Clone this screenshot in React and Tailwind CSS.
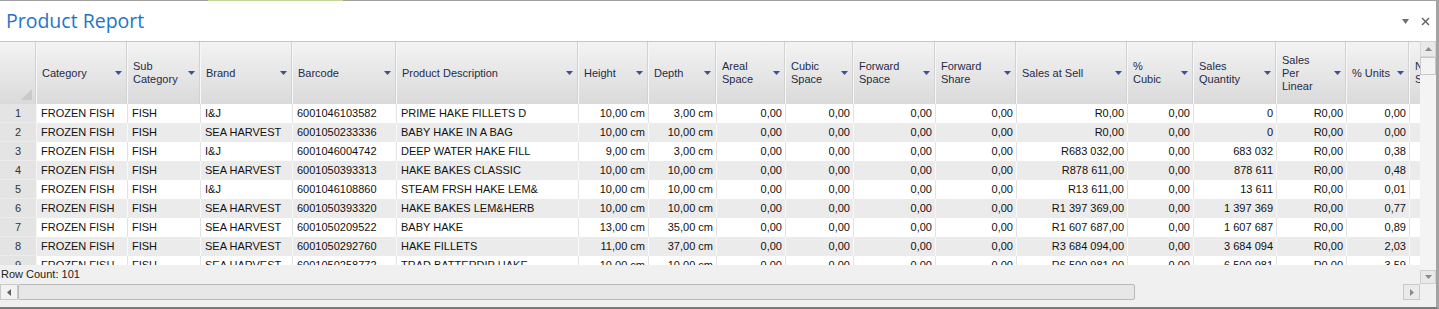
const columns = [
  { label: ["Category"], w: "w-[91px]" },
  { label: ["Sub", "Category"], w: "w-[73px]" },
  { label: ["Brand"], w: "w-[92px]" },
  { label: ["Barcode"], w: "w-[104px]" },
  { label: ["Product Description"], w: "w-[182px]" },
  { label: ["Height"], w: "w-[70px]", right: true },
  { label: ["Depth"], w: "w-[68px]", right: true },
  { label: ["Areal", "Space"], w: "w-[69px]", right: true },
  { label: ["Cubic", "Space"], w: "w-[68px]", right: true },
  { label: ["Forward", "Space"], w: "w-[82px]", right: true },
  { label: ["Forward", "Share"], w: "w-[81px]", right: true },
  { label: ["Sales at Sell"], w: "w-[111px]", right: true },
  { label: ["%", "Cubic"], w: "w-[66px]", right: true },
  { label: ["Sales", "Quantity"], w: "w-[83px]", right: true },
  { label: ["Sales", "Per", "Linear"], w: "w-[70px]", right: true },
  { label: ["% Units"], w: "w-[63px]", right: true },
  { label: ["N", "S"], w: "w-[70px]", right: true },
];

const z = "0,00";

const rows = [
  ["FROZEN FISH", "FISH", "I&J", "6001046103582", "PRIME HAKE FILLETS D", "10,00 cm", "3,00 cm", z, z, z, z, "R0,00", z, "0", "R0,00", z, ""],
  ["FROZEN FISH", "FISH", "SEA HARVEST", "6001050233336", "BABY HAKE IN A BAG", "10,00 cm", "10,00 cm", z, z, z, z, "R0,00", z, "0", "R0,00", z, ""],
  ["FROZEN FISH", "FISH", "I&J", "6001046004742", "DEEP WATER HAKE FILL", "9,00 cm", "3,00 cm", z, z, z, z, "R683 032,00", z, "683 032", "R0,00", "0,38", ""],
  ["FROZEN FISH", "FISH", "SEA HARVEST", "6001050393313", "HAKE BAKES CLASSIC", "10,00 cm", "10,00 cm", z, z, z, z, "R878 611,00", z, "878 611", "R0,00", "0,48", ""],
  ["FROZEN FISH", "FISH", "I&J", "6001046108860", "STEAM FRSH HAKE LEM&", "10,00 cm", "10,00 cm", z, z, z, z, "R13 611,00", z, "13 611", "R0,00", "0,01", ""],
  ["FROZEN FISH", "FISH", "SEA HARVEST", "6001050393320", "HAKE BAKES LEM&HERB", "10,00 cm", "10,00 cm", z, z, z, z, "R1 397 369,00", z, "1 397 369", "R0,00", "0,77", ""],
  ["FROZEN FISH", "FISH", "SEA HARVEST", "6001050209522", "BABY HAKE", "13,00 cm", "35,00 cm", z, z, z, z, "R1 607 687,00", z, "1 607 687", "R0,00", "0,89", ""],
  ["FROZEN FISH", "FISH", "SEA HARVEST", "6001050292760", "HAKE FILLETS", "11,00 cm", "37,00 cm", z, z, z, z, "R3 684 094,00", z, "3 684 094", "R0,00", "2,03", ""],
  ["FROZEN FISH", "FISH", "SEA HARVEST", "6001050258772", "TRAD BATTERDIP HAKE", "10,00 cm", "10,00 cm", z, z, z, z, "R6 500 981,00", z, "6 500 981", "R0,00", "3,59", ""],
];

function Arrow({ dir, color = "#8a8a8a" }) {
  const d = {
    up: "M0 4L3.5 0L7 4z",
    down: "M0 0h7L3.5 4z",
    left: "M4 0v7L0 3.5z",
    right: "M0 0v7L4 3.5z",
  }[dir];
  const horiz = dir === "left" || dir === "right";
  return (
    <svg width={horiz ? 4 : 7} height={horiz ? 7 : 4} viewBox={horiz ? "0 0 4 7" : "0 0 7 4"}>
      <path d={d} fill={color} />
    </svg>
  );
}

function HeaderCell({ col }) {
  return (
    <div
      className={`${col.w} shrink-0 h-full flex items-center justify-between pl-[5px] pr-[5px] border-r border-[#f7f7f7] shadow-[inset_-1px_0_0_#d2d2d2]`}
    >
      <div className="leading-[13px] text-[#1f2c48]">
        {col.label.map((l) => (
          <div key={l} className="whitespace-nowrap">{l}</div>
        ))}
      </div>
      <Arrow dir="down" color="#3d4f9c" />
    </div>
  );
}

export default function App() {
  return (
    <div className="w-[1439px] h-[309px] bg-white flex flex-col border-r-[3px] border-b-2 border-r-[#a3a3a3] border-b-[#7a7a7a] font-['Liberation_Sans',Arial,sans-serif] text-[11px] text-[#111] overflow-hidden">
      <div className="h-px flex shrink-0">
        <div className="w-[208px] bg-[#a0a0a0]" />
        <div className="w-[135px] bg-[#c4d79b]" />
        <div className="flex-1 bg-[#a0a0a0]" />
      </div>

      <div className="h-[40px] shrink-0 flex items-center justify-between pl-[6px] pr-[6px]">
        <h1 className="font-['Open_Sans',sans-serif] text-[19.5px] leading-[26px] text-[#1f74c8]">
          Product Report
        </h1>
        <div className="flex items-center gap-[12px]">
          <svg width="7" height="5" viewBox="0 0 7 5">
            <path d="M0 0h7L3.5 5z" fill="#707070" />
          </svg>
          <svg width="9" height="9" viewBox="0 0 9 9">
            <path d="M1 1l7 7M8 1L1 8" stroke="#606060" strokeWidth="1.4" />
          </svg>
        </div>
      </div>

      <div className="h-[243px] shrink-0 flex">
        <div className="w-[1420px] shrink-0 flex flex-col overflow-hidden">
          <div className="h-[63px] shrink-0 flex border-t border-[#c6c6c6] bg-linear-to-b from-[#f3f3f3] to-[#dadada]">
            <div className="w-[37px] shrink-0 h-full flex items-end justify-end pr-[4px] pb-[4px] border-r border-[#f7f7f7] shadow-[inset_-1px_0_0_#d2d2d2]">
              <svg width="11" height="11" viewBox="0 0 11 11">
                <path d="M11 0V11H0z" fill="#c9c9c9" />
              </svg>
            </div>
            {columns.map((c, i) => (
              <HeaderCell key={i} col={c} />
            ))}
          </div>

          <div className="h-[161px] shrink-0 overflow-hidden">
            {rows.map((r, ri) => {
              const even = ri % 2 === 1;
              return (
                <div key={ri} className={`h-[19px] flex ${even ? "bg-[#ebebeb]" : "bg-white"}`}>
                  <div className="w-[37px] shrink-0 flex items-center justify-center bg-[#e4e4e4] border-r border-b border-r-[#f5f5f5] border-b-[#ececec] text-[#333]">
                    {ri + 1}
                  </div>
                  {r.map((v, ci) => (
                    <div
                      key={ci}
                      className={`${columns[ci].w} shrink-0 flex items-center whitespace-nowrap overflow-hidden border-r ${even ? "border-[#f8f8f8]" : "border-[#e3e3e3]"} ${columns[ci].right ? "justify-end pr-[3px]" : "pl-[4px]"}`}
                    >
                      {v}
                    </div>
                  ))}
                </div>
              );
            })}
          </div>

          <div className="flex-1 bg-[#f0f0f0] flex items-center pl-[1px] text-[#222]">
            Row Count: 101
          </div>
        </div>

        <div className="w-[16px] shrink-0 flex flex-col bg-[#f4f4f4]">
          <div className="h-[16px] shrink-0 flex items-center justify-center bg-[#e9e9e9] border border-[#d6d6d6]">
            <Arrow dir="up" />
          </div>
          <div className="h-[18px] shrink-0 bg-[#f3f3f3] border border-[#c9c9c9]" />
          <div className="flex-1" />
          <div className="h-[14px] shrink-0 flex items-center justify-center bg-[#e9e9e9] border border-[#cfcfcf]">
            <Arrow dir="down" />
          </div>
        </div>
      </div>

      <div className="h-[16px] shrink-0 flex bg-[#f0f0f0]">
        <div className="w-[18px] shrink-0 flex items-center justify-center border border-[#c9c9c9] bg-[#f2f2f2]">
          <Arrow dir="left" color="#606060" />
        </div>
        <div className="w-[1117px] shrink-0 bg-[#e7e7e7] border border-[#b9b9b9] rounded-[2px]" />
        <div className="flex-1" />
        <div className="w-[17px] shrink-0 flex items-center justify-center border border-[#c9c9c9] bg-[#eaeaea]">
          <Arrow dir="right" />
        </div>
        <div className="w-[16px] shrink-0" />
      </div>

      <div className="flex-1 bg-[#f0f0f0]" />
    </div>
  );
}
